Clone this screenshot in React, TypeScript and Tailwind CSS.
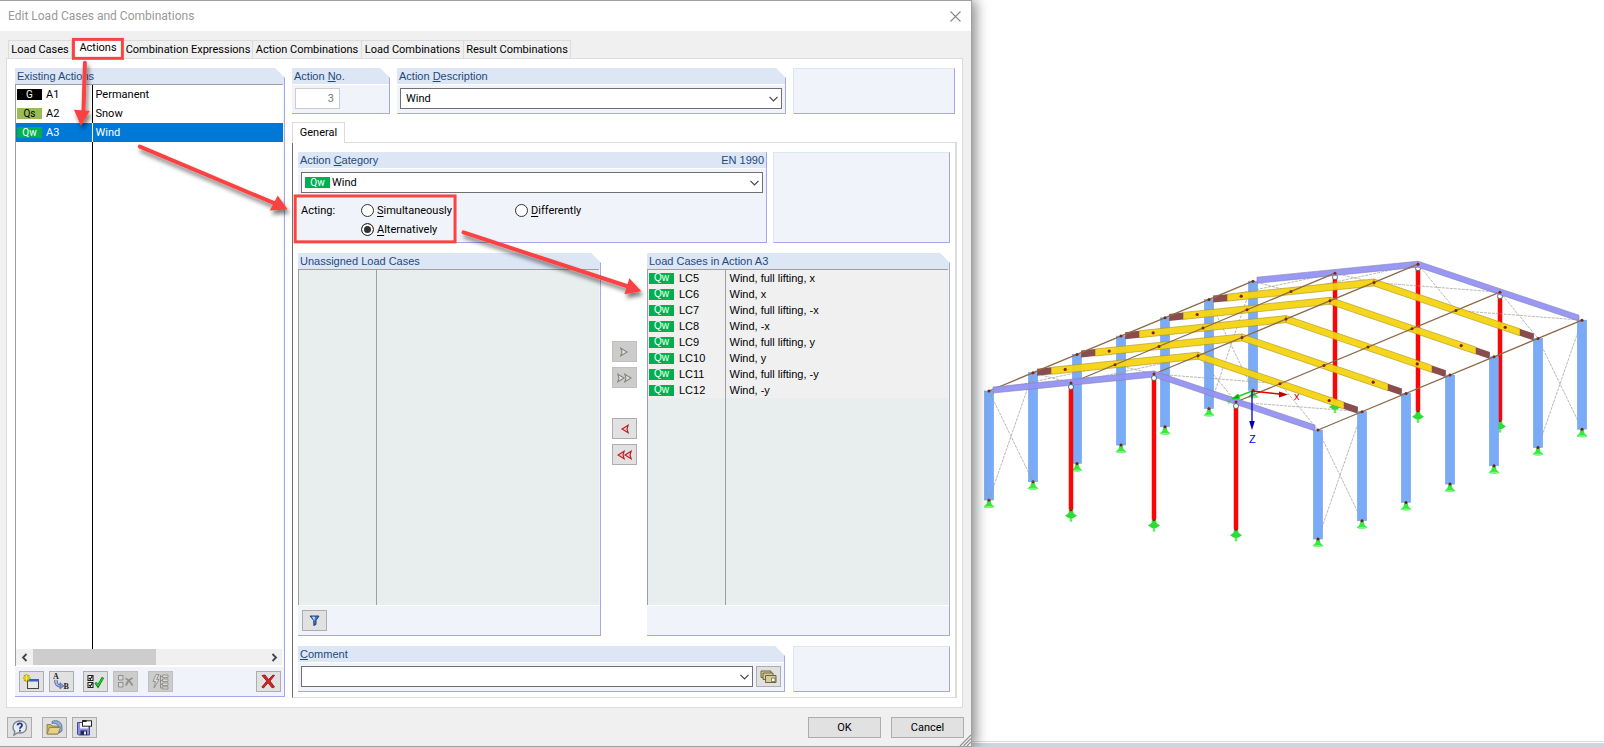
import React, { useState } from 'react';

const sans = "font-['Liberation_Sans',Arial,sans-serif]";

type Tone = 'g' | 'qs' | 'qw';

const toneClass: Record<Tone, string> = {
  g: 'bg-black text-white',
  qs: 'bg-[#9bbb59] text-black',
  qw: 'bg-[#00b050] text-white',
};

const toneLabel: Record<Tone, string> = { g: 'G', qs: 'Qs', qw: 'Qw' };

const tabs = [
  { name: 'Load Cases', width: 'w-16' },
  { name: 'Actions', width: 'w-[52px]' },
  { name: 'Combination Expressions', width: 'w-[129px]' },
  { name: 'Action Combinations', width: 'w-[109px]' },
  { name: 'Load Combinations', width: 'w-[102px]' },
  { name: 'Result Combinations', width: 'w-[107px]' },
];

const actions: { id: string; name: string; tone: Tone }[] = [
  { id: 'A1', name: 'Permanent', tone: 'g' },
  { id: 'A2', name: 'Snow', tone: 'qs' },
  { id: 'A3', name: 'Wind', tone: 'qw' },
];

const loadCases = [
  { id: 'LC5', name: 'Wind, full lifting, x' },
  { id: 'LC6', name: 'Wind, x' },
  { id: 'LC7', name: 'Wind, full lifting, -x' },
  { id: 'LC8', name: 'Wind, -x' },
  { id: 'LC9', name: 'Wind, full lifting, y' },
  { id: 'LC10', name: 'Wind, y' },
  { id: 'LC11', name: 'Wind, full lifting, -y' },
  { id: 'LC12', name: 'Wind, -y' },
];

function Badge({ tone }: { tone: Tone }) {
  return (
    <span
      className={`inline-flex h-[11px] w-[25px] shrink-0 items-center justify-center text-[10px] leading-none ${toneClass[tone]}`}
    >
      {toneLabel[tone]}
    </span>
  );
}

type PanelProps = {
  title: React.ReactNode;
  extra?: string;
  cut?: boolean;
  className?: string;
  children: React.ReactNode;
};

// Blue titled group, usually with the top right corner cut off
function Panel({ title, extra, cut = true, className = '', children }: PanelProps) {
  return (
    <section
      className={`flex flex-col border-r border-b border-[#a6a6ee] bg-[#f0f3f9] ${
        cut ? '[clip-path:polygon(0_0,calc(100%_-_10px)_0,100%_10px,100%_100%,0_100%)]' : ''
      } ${className}`}
    >
      <h2
        className={`flex h-4 shrink-0 items-center justify-between bg-[#dce6f5] pr-0.5 pl-0.5 text-[11px] leading-4 whitespace-nowrap text-[#1f497d] ${sans}`}
      >
        <span>{title}</span>
        {extra && <span>{extra}</span>}
      </h2>
      {children}
    </section>
  );
}

function EmptyPanel({ className = '' }: { className?: string }) {
  return (
    <div
      className={`shrink-0 border border-t-[#dce6f5] border-r-[#a6a6ee] border-b-[#a6a6ee] border-l-[#dce6f5] bg-[#f0f3f9] ${className}`}
    />
  );
}

type ComboProps = { label: string; value: string; tone?: Tone; className?: string };

function Combo({ label, value, tone, className = '' }: ComboProps) {
  return (
    <div className={`relative ${className}`}>
      <select
        aria-label={label}
        defaultValue={value}
        className={`block h-[21px] w-full appearance-none border border-[#707070] bg-white pr-5 text-[11px] text-black ${
          tone ? 'pl-[30px]' : 'pl-[5px]'
        }`}
      >
        <option>{value}</option>
      </select>
      {tone && (
        <span className="pointer-events-none absolute inset-y-0 left-1 flex items-center">
          <Badge tone={tone} />
        </span>
      )}
      <svg viewBox="0 0 9 6" className="pointer-events-none absolute top-2 right-1 h-1.5 w-[9px]">
        <path d="M0.5 0.8 4.5 4.8 8.5 0.8" fill="none" stroke="#444" strokeWidth="1.2" />
      </svg>
    </div>
  );
}

type IconButtonProps = {
  label: string;
  disabled?: boolean;
  className?: string;
  children: React.ReactNode;
};

function IconButton({ label, disabled, className = '', children }: IconButtonProps) {
  return (
    <button
      type="button"
      aria-label={label}
      disabled={disabled}
      className={`flex h-[21px] w-[25px] shrink-0 items-center justify-center border ${
        disabled ? 'border-[#bfbfbf] bg-[#cccccc]' : 'border-[#adadad] bg-[#e1e1e1]'
      } ${className}`}
    >
      {children}
    </button>
  );
}

type RadioProps = { label: string; checked: boolean; onChange: () => void; className?: string };

function Radio({ label, checked, onChange, className = '' }: RadioProps) {
  return (
    <label className={`flex items-center gap-[3px] whitespace-nowrap ${className}`}>
      <input
        type="radio"
        name="acting"
        checked={checked}
        onChange={onChange}
        className="h-[13px] w-[13px] appearance-none rounded-full border border-[#333] bg-white checked:bg-[#333] checked:shadow-[inset_0_0_0_2px_white]"
      />
      <span>
        <u className="underline-offset-2">{label[0]}</u>
        {label.slice(1)}
      </span>
    </label>
  );
}

/* ---------- icons ---------- */

function NewIcon() {
  return (
    <svg viewBox="0 0 17 16" className="h-4 w-[17px]">
      <rect x="4.5" y="5.5" width="11" height="9" fill="#e8e8e4" stroke="#444" />
      <rect x="5" y="5" width="11" height="2.5" fill="#3a5fc0" />
      <path d="M3.5 0v8M0 4h7.500M1 1.400l5.200 5.200M6.200 1.400 1 6.600" stroke="#a89a10" strokeWidth="1.600" />
      <path d="M3.5 .8v6.500M.5 4h6M1.500 2l4 4M5.500 2l-4 4" stroke="#ffee20" strokeWidth="1" />
    </svg>
  );
}

function RenameIcon() {
  return (
    <svg viewBox="0 0 17 17" className="h-[17px] w-[17px]">
      <text x="0" y="6" fontSize="8" fontWeight="bold" fontFamily="Liberation Serif, serif" fill="#222">A</text>
      <text x="10.5" y="16" fontSize="8" fontWeight="bold" fontFamily="Liberation Serif, serif" fill="#222">B</text>
      <path d="M3 7c-.5 4 1.500 6 5 6" fill="none" stroke="#4a5f96" strokeWidth="3.400" />
      <path d="M3 7c-.5 4 1.500 6 5 6" fill="none" stroke="#a9bce6" strokeWidth="1.800" />
      <path d="M7 9.500 11 13 7 16z" fill="#7f97cf" stroke="#4a5f96" strokeWidth=".6" />
    </svg>
  );
}

function CheckAllIcon() {
  return (
    <svg viewBox="0 0 17 15" className="h-[15px] w-[17px]">
      <path d="M1 1.500h5v5H1zM1 8.500h5v5H1z" fill="#fff" stroke="#222" strokeWidth="1.100" />
      <path d="M2 3.800 3.300 5.300 5.300 2M2 10.800l1.300 1.500L5.300 9" fill="none" stroke="#111" strokeWidth="1.200" />
      <path d="M8.500 8.500 11 12l5-8.500" fill="none" stroke="#0b7a1a" strokeWidth="2.600" />
      <path d="M8.800 8.500 11 11.500l4.700-7.700" fill="none" stroke="#25d03c" strokeWidth="1.300" />
    </svg>
  );
}

function UncheckAllIcon() {
  return (
    <svg viewBox="0 0 17 15" className="h-[15px] w-[17px]">
      <path d="M1.500 1.500h4.500v4.500h-4.500zM1.500 8.500h4.500v4.500h-4.500z" fill="#d8d8d8" stroke="#8f8f8a" />
      <path d="M8.500 4.500c3 1 5 3.500 7 7M15.500 4c-3 1.500-5.500 4-6.500 7.500" fill="none" stroke="#8f8f8a" strokeWidth="1.800" />
    </svg>
  );
}

function AssignIcon() {
  return (
    <svg viewBox="0 0 17 16" className="h-4 w-[17px]">
      <path d="M4 .5 1 7.500h2.500L2 14l5-8.500H4.500L7 .5z" fill="#dcdcd6" stroke="#8f8f8a" strokeWidth=".9" />
      <path d="M8.500 1v13M8.500 2.500h2M8.500 6.500h2M8.500 10.500h2M8.500 14h2" stroke="#8f8f8a" fill="none" />
      <path d="M10.500 1h5.500v2.500h-5.500zM10.500 5h5.500v2.500h-5.500zM10.500 9h5.500v2.500h-5.500zM10.500 12.800h5.500v2.200h-5.500z" fill="#dcdcd6" stroke="#8f8f8a" strokeWidth=".9" />
    </svg>
  );
}

function DeleteIcon() {
  return (
    <svg viewBox="0 0 15 15" className="h-[15px] w-[15px]">
      <path d="M1 1.500 4 1l3.500 4.500L12 1l1.500.5-4.500 5.500 4.500 6-2.500.8-4-5-4.500 5.200L.8 13l5-6z" fill="#e02020" stroke="#7a1515" strokeWidth=".8" />
    </svg>
  );
}

function HelpIcon() {
  return (
    <svg viewBox="0 0 17 16" className="h-4 w-[17px]">
      <path d="M9 1c4 0 6.500 2.500 6.500 6S13 13 9 13c-.8 0-1.500 0-2.200-.3L3 15l.8-3.500C2.500 10.500 2 8.800 2 7c0-3.500 3-6 7-6z" fill="#e9edf4" stroke="#7b828f" strokeWidth="1.400" />
      <path d="M6.500 5.300C6.800 2.600 11.300 2.800 11 5.400 10.800 7 9 7 8.900 8.800" fill="none" stroke="#1e3a86" strokeWidth="1.800" />
      <rect x="8" y="9.800" width="1.800" height="1.800" fill="#1e3a86" />
    </svg>
  );
}

function OpenIcon() {
  return (
    <svg viewBox="0 0 17 15" className="h-[15px] w-[17px]">
      <path d="M6 1.500C10-.5 16 1 16 7.500v3.500l-3 2V8C13 5 10 2.500 6 3.500z" fill="#8fb0dc" stroke="#4b6a97" strokeWidth=".8" />
      <path d="M1 4.500h4L6 6h6v8H1z" fill="#c9b566" stroke="#85763a" strokeWidth=".8" />
      <path d="M1 14 3.500 7.500h11L12 14z" fill="#e3d28a" stroke="#85763a" strokeWidth=".8" />
    </svg>
  );
}

function SaveIcon() {
  return (
    <svg viewBox="0 0 17 16" className="h-4 w-[17px]">
      <path d="M1.500 2.500h12v12.500h-11l-1-1z" fill="#8c8fe0" stroke="#4a4a8a" />
      <rect x="4" y="3" width="8" height="5.500" fill="#f2f2f2" />
      <rect x="4.500" y="10.500" width="6.500" height="4.500" fill="#222b55" />
      <rect x="8" y="11.500" width="2" height="3" fill="#e8e8f5" />
      <rect x="6.500" y=".8" width="9" height="5.400" fill="#fff" stroke="#222" />
      <path d="M6.500 1h4" stroke="#222" strokeWidth="2" />
    </svg>
  );
}

function FilterIcon() {
  return (
    <svg viewBox="0 0 11 11" className="h-[11px] w-[11px]">
      <path d="M1 1h9L7 5.500v4L4.800 10.500v-5z" fill="#3f7bd0" stroke="#1d3763" strokeWidth=".9" />
      <path d="M3 1.800h3l-.6 4z" fill="#c8dcf6" />
    </svg>
  );
}

function CardsIcon() {
  return (
    <svg viewBox="0 0 17 13" className="h-[13px] w-[17px]">
      <g fill="#d8cd9a" stroke="#5f5836" strokeWidth=".9">
        <path d="M1 1h10v6.500H1z" />
        <path d="M3 3h10v6.500H3z" />
        <path d="M5.500 5.500h10.500v7H5.500z" />
      </g>
      <path d="M11.500 8h3.500v3.500h-3.500z" fill="#fff" stroke="#5f5836" strokeWidth=".7" />
    </svg>
  );
}

type TriangleProps = { flip?: boolean; double?: boolean; off?: boolean };

function TriangleIcon({ flip, double, off }: TriangleProps) {
  const fill = off ? '#e9e9dc' : '#ffc4c4';
  const stroke = off ? '#85857c' : '#b5202a';
  const shapes = double ? [0, 7] : [3];
  return (
    <svg viewBox="0 0 15 10" className={`h-2.5 w-[15px] ${flip ? 'rotate-180' : ''}`}>
      {shapes.map((x) => (
        <path
          key={x}
          d={`M${x + 0.8} 1.2 ${x + 7} 5 ${x + 0.8} 8.8 ${x + 2} 5z`}
          fill={fill}
          stroke={stroke}
          strokeWidth="1.1"
        />
      ))}
    </svg>
  );
}

/* ---------- structural model ---------- */

type Pt = [number, number];

const frames = [0, 1, 2, 3, 4, 5, 6];

// Nodes of one frame: eave, quarter, ridge, quarter, eave
const frameNodes = (i: number): Pt[] => {
  const x = 17 + i * 44;
  const y = 391 - i * 18.3;
  return [
    [x, y],
    [x + 82, y - 8],
    [x + 165, y - 17],
    [x + 247, y + 11],
    [x + 329, y + 39],
  ];
};

const along = (a: Pt, b: Pt, t: number): Pt => [a[0] + (b[0] - a[0]) * t, a[1] + (b[1] - a[1]) * t];

const band = (a: Pt, b: Pt, h: number) =>
  `${a[0]},${a[1] - h} ${b[0]},${b[1] - h} ${b[0]},${b[1] + h} ${a[0]},${a[1] + h}`;

function Support({ x, y }: { x: number; y: number }) {
  return (
    <g transform={`translate(${x} ${y})`}>
      <path d="M-1.5 0h3L2.500 4 5.500 7q-5.500 2-11 0L-2.500 4z" fill="#37e83e" />
      <path d="M-5.500 7q5.500-2 11 0-5.500 2-11 0z" fill="#7dfb7d" />
      <circle r="1.5" fill="#7a1a14" />
    </g>
  );
}

function PinSupport({ x, y }: { x: number; y: number }) {
  return (
    <g transform={`translate(${x} ${y})`}>
      <path d="M0 6v6" stroke="#5cf05f" strokeWidth="2.5" />
      <path d="M-2 0h4l.5 3.500L6 6 2 8.500h-4L-6 6l3.500-2.500z" fill="#2fdc36" />
      <circle r="1.5" fill="#7a1a14" />
    </g>
  );
}

function Column({ p }: { p: Pt }) {
  return (
    <g>
      <rect x={p[0] - 4.5} y={p[1]} width="9" height="109" fill="#7aabf7" stroke="#6d9cf0" strokeWidth=".6" />
      <Support x={p[0]} y={p[1] + 109} />
    </g>
  );
}

function GableColumn({ p, base }: { p: Pt; base: number }) {
  return (
    <g>
      <PinSupport x={p[0]} y={base} />
      <path d={`M${p[0]} ${p[1] + 3}V${base}`} stroke="#fb0606" strokeWidth="4.5" />
      <circle cx={p[0]} cy={p[1] + 4} r="2.5" fill="#fff" stroke="#2b6060" strokeWidth=".8" />
    </g>
  );
}

function GableBeam({ i }: { i: number }) {
  const [l, , r, , e] = frameNodes(i);
  return (
    <g fill="#9392f2" fillOpacity=".95" stroke="#8480b8" strokeWidth=".6">
      <polygon points={band([l[0] + 4, l[1] - 1], r, 3)} />
      <polygon points={band(r, [e[0] - 3, e[1] - 2], 3)} />
    </g>
  );
}

function RoofFrame({ i }: { i: number }) {
  const [l, , r, , e] = frameNodes(i);
  const a = along(l, r, 0.11);
  const b = along(e, r, 0.11);
  return (
    <g>
      <g fill="#f5d411" fillOpacity=".95" stroke="#a8921c" strokeWidth=".6">
        <polygon points={band(a, r, 3.5)} />
        <polygon points={band(r, b, 3.5)} />
      </g>
      <g fill="#8a4d4d">
        <polygon points={band(along(l, r, 0.025), a, 3.5)} />
        <polygon points={band(b, along(e, r, 0.025), 3.5)} />
      </g>
      {[along(l, r, 0.195), along(e, r, 0.2)].map((p) => (
        <circle key={p[0]} cx={p[0]} cy={p[1]} r="1.6" fill="#8c1a10" />
      ))}
    </g>
  );
}

function Bracing({ from, to }: { from: number; to: number }) {
  const a = frameNodes(from);
  const b = frameNodes(to);
  const lines: [Pt, Pt][] = [];
  for (let k = 0; k < 4; k++) {
    lines.push([a[k], b[k + 1]], [b[k], a[k + 1]]);
  }
  [0, 4].forEach((k) => {
    lines.push([a[k], [b[k][0], b[k][1] + 109]], [b[k], [a[k][0], a[k][1] + 109]]);
  });
  return (
    <g stroke="#9a9c90" strokeWidth=".7" strokeDasharray="3 1">
      {lines.map(([p, q], n) => (
        <line key={n} x1={p[0]} y1={p[1]} x2={q[0]} y2={q[1]} />
      ))}
    </g>
  );
}

function Model() {
  const front = frameNodes(0);
  const back = frameNodes(6);
  return (
    <svg viewBox="0 0 632 741" preserveAspectRatio="xMinYMin meet" className="w-full" role="img" aria-label="Hall frame model">
      {frames.map((i) => (
        <Column key={i} p={frameNodes(6 - i)[0]} />
      ))}
      {[1, 2, 3].map((k) => (
        <GableColumn key={k} p={back[k]} base={back[k][0] * 0.1185 + 358} />
      ))}
      <Bracing from={5} to={6} />
      <Bracing from={0} to={1} />
      <GableBeam i={6} />
      {[5, 4, 3, 2, 1].map((i) => (
        <RoofFrame key={i} i={i} />
      ))}
      {frames.map((i) => (
        <Column key={i} p={frameNodes(6 - i)[4]} />
      ))}
      {[0, 1, 2, 3, 4].map((k) => (
        <line key={k} x1={front[k][0]} y1={front[k][1]} x2={back[k][0]} y2={back[k][1]} stroke="#8c6a4a" strokeWidth="1.3" />
      ))}
      <GableBeam i={0} />
      {[1, 2, 3].map((k) => (
        <GableColumn key={k} p={front[k]} base={front[k][0] * 0.1185 + 498} />
      ))}
      {frames.flatMap((i) =>
        frameNodes(i).map((p, k) => <circle key={`${i}-${k}`} cx={p[0]} cy={p[1]} r="1.5" fill="#7a2a18" />),
      )}
      {/* Global axes */}
      <g fontFamily="Liberation Sans, Arial, sans-serif" fontSize="11">
        <path d="M280 391 265 397" stroke="#12d812" strokeWidth="1.5" />
        <path d="m260 399 6-5 1.500 4.500z" fill="#0b9a12" stroke="#12d812" />
        <path d="M280 391 307 394" stroke="#e00000" strokeWidth="1.5" />
        <path d="m316 394.500-9-3v6z" fill="#c00000" />
        <path d="M280 391v31" stroke="#0000e0" strokeWidth="1.3" />
        <path d="m280 430-2.800-9h5.600z" fill="#0000b0" />
        <text x="322" y="400" fill="#e00000">x</text>
        <text x="254" y="404" fontSize="8" fill="#12d812">Y</text>
        <text x="277" y="443" fill="#0000e0">Z</text>
      </g>
    </svg>
  );
}

/* ---------- annotations ---------- */

function Annotations() {
  return (
    <svg
      viewBox="0 0 972 747"
      preserveAspectRatio="none"
      className="pointer-events-none absolute inset-0 h-full w-full"
      aria-hidden="true"
    >
      <defs>
        <filter id="lift" x="-20%" y="-20%" width="140%" height="150%">
          <feDropShadow dx="2" dy="4" stdDeviation="2" floodColor="#000" floodOpacity=".5" />
        </filter>
      </defs>
      <g fill="none" stroke="#fb4343" strokeWidth="3">
        <rect x="73.5" y="38.5" width="49" height="19" />
        <rect x="295.5" y="195.5" width="160" height="46" />
      </g>
      <g filter="url(#lift)">
        <path d="M85 62 83.500 112M140 146l135 57M464 232l164 54" stroke="#fb4343" strokeWidth="4" strokeLinecap="round" />
        <path d="m81 125-7-16 16 1zM288 209l-18 1 8-15zM642 291l-17 3 5-16z" fill="#fb4343" />
      </g>
    </svg>
  );
}

function ActionsPanel() {
  const [selected, setSelected] = useState('A3');

  return (
    <Panel title="Existing Actions" className="mb-px w-[270px] shrink-0">
      <div className="mr-px flex flex-1 flex-col border-t border-l border-[#a0a0a0] bg-white pb-px">
        <table className="w-full flex-1 table-fixed border-collapse">
          <colgroup>
            <col className="w-[76px]" />
            <col />
          </colgroup>
          <tbody>
            {actions.map((action) => (
              <tr
                key={action.id}
                onClick={() => setSelected(action.id)}
                className={selected === action.id ? 'h-[19px] bg-[#0078d7] text-white' : 'h-[19px]'}
              >
                <td className={`border-r p-0 pl-px ${selected === action.id ? 'border-white' : 'border-black'}`}>
                  <span className="flex items-center gap-1">
                    <Badge tone={action.tone} />
                    {action.id}
                  </span>
                </td>
                <td className="p-0 pl-[3px]">{action.name}</td>
              </tr>
            ))}
            <tr>
              <td className="border-r border-black p-0" />
              <td />
            </tr>
          </tbody>
        </table>
        <div className="mr-px flex h-4 shrink-0 items-center bg-[#f0f0f0]">
          <svg viewBox="0 0 17 15" className="h-[15px] w-[17px]">
            <path d="M10.500 4 7 7.500l3.500 3.500" fill="none" stroke="#444" strokeWidth="1.8" />
          </svg>
          <div className="flex h-full flex-1">
            <div className="w-[53%] bg-[#cdcdcd]" />
          </div>
          <svg viewBox="0 0 17 15" className="h-[15px] w-[17px]">
            <path d="M7.500 4 11 7.500 7.500 11" fill="none" stroke="#444" strokeWidth="1.8" />
          </svg>
        </div>
      </div>
      <div className="flex h-[30px] shrink-0 items-center border-t border-white pr-[3px] pl-1">
        <IconButton label="New action"><NewIcon /></IconButton>
        <IconButton label="Renumber" className="ml-[5px]"><RenameIcon /></IconButton>
        <IconButton label="Select all" className="ml-[9px]"><CheckAllIcon /></IconButton>
        <IconButton label="Deselect all" disabled className="ml-[5px]"><UncheckAllIcon /></IconButton>
        <IconButton label="Assign automatically" disabled className="ml-[10px]"><AssignIcon /></IconButton>
        <IconButton label="Delete" className="ml-auto"><DeleteIcon /></IconButton>
      </div>
    </Panel>
  );
}

function LoadCaseTable({ rows }: { rows: typeof loadCases }) {
  return (
    <div className={`mr-px flex flex-1 flex-col border-t border-l border-[#a0a0a0] bg-[#e8eeee] ${sans}`}>
      <table className="w-full flex-1 table-fixed border-collapse">
        <colgroup>
          <col className="w-[77px]" />
          <col />
        </colgroup>
        <tbody>
          {rows.map((row) => (
            <tr key={row.id} className="h-4 bg-[#f0f0f0]">
              <td className="border-r border-[#a0a0a0] p-0 pl-px">
                <span className="flex items-center gap-[5px]">
                  <Badge tone="qw" />
                  {row.id}
                </span>
              </td>
              <td className="p-0 pl-1">{row.name}</td>
            </tr>
          ))}
          <tr>
            <td className="border-r border-[#a0a0a0] p-0" />
            <td />
          </tr>
        </tbody>
      </table>
    </div>
  );
}

function GeneralPage() {
  const [acting, setActing] = useState('Alternatively');

  return (
    <div className="-mr-0.5 flex flex-1 flex-col border border-r-2 border-[#dcdcdc] border-l-[#6e6e6e] pt-[9px] pr-[5px] pb-[5px] pl-[5px]">
      <div className="flex gap-1.5">
        <Panel
          title={<>Action <u>C</u>ategory</>}
          extra="EN 1990"
          cut={false}
          className="flex-1"
        >
          <div className="border-t border-white px-[3px] pt-[3px]">
            <Combo label="Action Category" value="Wind" tone="qw" />
          </div>
          <div className="grid grid-cols-[60px_154px_1fr] px-[3px] pt-2 pb-[3px]">
            <span className="h-[19px] leading-[19px]">Acting:</span>
            <Radio label="Simultaneously" checked={acting === 'Simultaneously'} onChange={() => setActing('Simultaneously')} className="h-[19px]" />
            <Radio label="Differently" checked={acting === 'Differently'} onChange={() => setActing('Differently')} className="h-[19px]" />
            <Radio label="Alternatively" checked={acting === 'Alternatively'} onChange={() => setActing('Alternatively')} className="col-start-2 h-[19px]" />
          </div>
        </Panel>
        <EmptyPanel className="w-[177px]" />
      </div>

      <div className="mt-[10px] flex flex-1">
        <Panel title="Unassigned Load Cases" className="flex-1">
          <LoadCaseTable rows={[]} />
          <div className="flex h-[30px] items-center border-t border-white px-1">
            <IconButton label="Filter"><FilterIcon /></IconButton>
          </div>
        </Panel>
        <div className="flex w-[46px] shrink-0 flex-col items-center gap-[5px] pt-[88px]">
          <IconButton label="Add selected" disabled><TriangleIcon off /></IconButton>
          <IconButton label="Add all" disabled><TriangleIcon off double /></IconButton>
          <IconButton label="Remove selected" className="mt-[25px]"><TriangleIcon flip /></IconButton>
          <IconButton label="Remove all"><TriangleIcon flip double /></IconButton>
        </div>
        <Panel title="Load Cases in Action A3" className="flex-1">
          <LoadCaseTable rows={loadCases} />
          <div className="h-[30px] border-t border-white" />
        </Panel>
      </div>

      <div className="mt-[10px] flex gap-2">
        <Panel title={<><u>C</u>omment</>} className="flex-1">
          <div className="flex gap-[3px] border-t border-white pt-[3px] pr-[3px] pb-1 pl-[3px]">
            <Combo label="Comment" value="" className="flex-1" />
            <IconButton label="Comment templates"><CardsIcon /></IconButton>
          </div>
        </Panel>
        <EmptyPanel className="w-[157px]" />
      </div>
    </div>
  );
}

function Dialog() {
  return (
    <div className="relative z-10 flex flex-col border-t border-r border-b border-[#a0a0a0] bg-[#f0f0f0] shadow-[4px_0_12px_rgba(0,0,0,0.45)]">
      <header className="flex h-[30px] shrink-0 items-center justify-between bg-white pr-2 pl-2">
        <h1 className="text-[12px] text-[#999]">Edit Load Cases and Combinations</h1>
        <button type="button" aria-label="Close" className="flex h-4 w-4 items-center justify-center">
          <svg viewBox="0 0 11 11" className="h-[11px] w-[11px]">
            <path d="M.5.5l10 10M10.500.5l-10 10" stroke="#888" strokeWidth="1.1" />
          </svg>
        </button>
      </header>

      <nav className="flex h-[27px] shrink-0 items-end pl-2">
        {tabs.map((tab) => (
          <button
            key={tab.name}
            type="button"
            className={
              tab.name === 'Actions'
                ? `h-5 bg-white pb-0.5 whitespace-nowrap ${tab.width}`
                : `h-[18px] border-t border-r border-[#dcdcdc] whitespace-nowrap first:border-l ${tab.width}`
            }
          >
            {tab.name}
          </button>
        ))}
      </nav>

      <main className="mr-2 ml-1.5 flex flex-1 gap-[7px] border border-[#dcdcdc] bg-white pt-[9px] pr-[7px] pb-[9px] pl-2">
        <ActionsPanel />

        <div className="flex flex-1 flex-col">
          <div className="flex gap-[7px]">
            <Panel title={<>Action <u>N</u>o.</>} className="w-[98px] shrink-0">
              <div className="border-t border-white px-[3px] pt-[3px] pb-1">
                <input
                  aria-label="Action No."
                  readOnly
                  value="3"
                  className="block h-[21px] w-[45px] border border-[#cccccc] bg-white pr-[5px] text-right text-[11px] text-[#777]"
                />
              </div>
            </Panel>
            <Panel title={<>Action <u>D</u>escription</>} className="flex-1">
              <div className="border-t border-white px-[3px] pt-[3px] pb-1">
                <Combo label="Action Description" value="Wind" />
              </div>
            </Panel>
            <EmptyPanel className="w-[162px]" />
          </div>

          <button
            type="button"
            className="relative z-10 mt-2 -mb-px h-[21px] w-[53px] border border-b-0 border-[#dcdcdc] bg-white pb-0.5"
          >
            General
          </button>
          <GeneralPage />
        </div>
      </main>

      <footer className="flex h-[38px] shrink-0 items-center pt-px pr-[7px] pl-[7px]">
        <IconButton label="Help"><HelpIcon /></IconButton>
        <IconButton label="Open" className="ml-[10px]"><OpenIcon /></IconButton>
        <IconButton label="Save" className="ml-[5px]"><SaveIcon /></IconButton>
        <button type="button" className="ml-auto h-[21px] w-[73px] border border-[#adadad] bg-[#e1e1e1]">
          OK
        </button>
        <button type="button" className="ml-[10px] h-[21px] w-[73px] border border-[#adadad] bg-[#e1e1e1]">
          Cancel
        </button>
      </footer>
      <svg viewBox="0 0 12 12" className="absolute right-0 bottom-0 h-3 w-3">
        <path d="M1 12 12 1M4.500 12 12 4.500M8 12l4-4" stroke="#909090" strokeWidth="1.2" />
      </svg>

      <Annotations />
    </div>
  );
}

function App() {
  return (
    <div className="grid min-h-screen grid-cols-[972fr_632fr] bg-white font-[Roboto,'Noto_Sans',sans-serif] text-[11px] leading-[13px] text-black">
      <Dialog />
      <div className="flex flex-col justify-between">
        <Model />
        <div className="border-t border-[#dcdcdc] pt-px">
          <div className="h-1 bg-[#d0d5dc]" />
        </div>
      </div>
    </div>
  );
}

export default App;
